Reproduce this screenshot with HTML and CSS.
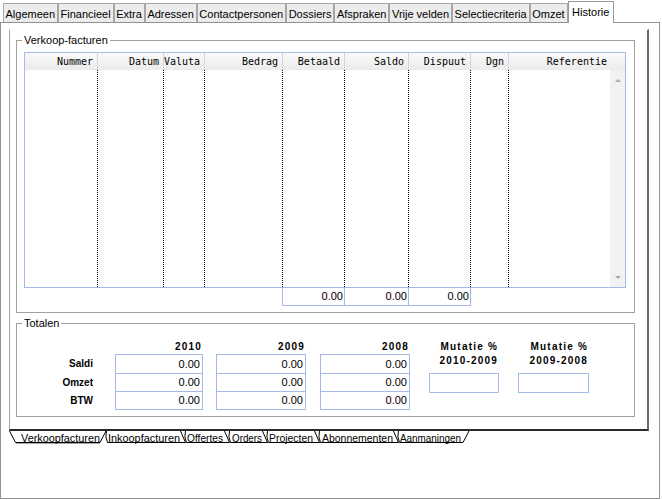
FILE: index.html
```html
<!DOCTYPE html>
<html>
<head>
<meta charset="utf-8">
<title>Historie</title>
<link rel="stylesheet" href="styles.css">
</head>
<body>
<div class="window">
  <div class="toptabs">
    <div class="tab">Algemeen</div>
    <div class="tab">Financieel</div>
    <div class="tab">Extra</div>
    <div class="tab">Adressen</div>
    <div class="tab">Contactpersonen</div>
    <div class="tab">Dossiers</div>
    <div class="tab">Afspraken</div>
    <div class="tab">Vrije velden</div>
    <div class="tab">Selectiecriteria</div>
    <div class="tab">Omzet</div>
    <div class="tab active">Historie</div>
  </div>
  <div class="frame">
    <div class="panel">
      <fieldset class="group g1">
        <legend>Verkoop-facturen</legend>
        <div class="grid">
          <div class="ghead">
            <div class="hc">Nummer</div>
            <div class="hc">Datum</div>
            <div class="hc">Valuta</div>
            <div class="hc">Bedrag</div>
            <div class="hc">Betaald</div>
            <div class="hc">Saldo</div>
            <div class="hc">Dispuut</div>
            <div class="hc">Dgn</div>
            <div class="hc noline">Referentie</div>
            <div class="hc noline"></div>
          </div>
          <div class="gbody">
            <div class="bc"></div>
            <div class="bc"></div>
            <div class="bc"></div>
            <div class="bc"></div>
            <div class="bc"></div>
            <div class="bc"></div>
            <div class="bc"></div>
            <div class="bc"></div>
            <div class="bc last"></div>
            <div class="scroll">
              <span class="arr up"></span>
              <span class="arr down"></span>
            </div>
          </div>
        </div>
        <div class="sumrow">
          <div class="sc s1">0.00</div>
          <div class="sc s2">0.00</div>
          <div class="sc s3">0.00</div>
        </div>
      </fieldset>
      <fieldset class="group g2">
        <legend>Totalen</legend>
        <div class="tot">
          <div class="tcol lab">
            <div class="th"></div>
            <div class="tl r1">Saldi</div>
            <div class="tl r2">Omzet</div>
            <div class="tl r3">BTW</div>
          </div>
          <div class="tcol ca">
            <div class="th">2010</div>
            <div class="cell r1">0.00</div>
            <div class="cell r2">0.00</div>
            <div class="cell r3">0.00</div>
          </div>
          <div class="tcol cb">
            <div class="th">2009</div>
            <div class="cell r1">0.00</div>
            <div class="cell r2">0.00</div>
            <div class="cell r3">0.00</div>
          </div>
          <div class="tcol cc">
            <div class="th">2008</div>
            <div class="cell r1">0.00</div>
            <div class="cell r2">0.00</div>
            <div class="cell r3">0.00</div>
          </div>
          <div class="tcol cd">
            <div class="th mh">Mutatie %<br>2010-2009</div>
            <div class="mbox"></div>
          </div>
          <div class="tcol ce">
            <div class="th mh">Mutatie %<br>2009-2008</div>
            <div class="mbox"></div>
          </div>
        </div>
      </fieldset>
    </div>
    <svg class="btabs" width="470" height="16" viewBox="0 0 470 16">
      <g transform="translate(-9,0)" font-family="Liberation Sans, Arial, sans-serif" font-size="11" fill="#000">
        <path d="M106.5,0 Q104.8,6 107.5,11.5 L185.5,11.5 L180.5,0" fill="none" stroke="#000"/>
        <text x="108" y="10.5" textLength="72" lengthAdjust="spacingAndGlyphs">Inkoopfacturen</text>
        <path d="M185.5,0 Q183.8,6 186.5,11.5 L229.5,11.5 L224.5,0" fill="none" stroke="#000"/>
        <text x="187" y="10.5" textLength="36" lengthAdjust="spacingAndGlyphs">Offertes</text>
        <path d="M229.5,0 Q227.8,6 230.5,11.5 L267.5,11.5 L262.5,0" fill="none" stroke="#000"/>
        <text x="232" y="10.5" textLength="30" lengthAdjust="spacingAndGlyphs">Orders</text>
        <path d="M267.5,0 Q265.8,6 268.5,11.5 L319.5,11.5 L314.5,0" fill="none" stroke="#000"/>
        <text x="269" y="10.5" textLength="44" lengthAdjust="spacingAndGlyphs">Projecten</text>
        <path d="M319.5,0 Q317.8,6 320.5,11.5 L398.5,11.5 L393.5,0" fill="none" stroke="#000"/>
        <text x="322" y="10.5" textLength="71" lengthAdjust="spacingAndGlyphs">Abonnementen</text>
        <path d="M398.5,0 Q396.8,6 399.5,11.5 L463,11.5 L469,0" fill="none" stroke="#000"/>
        <text x="400" y="10.5" textLength="61" lengthAdjust="spacingAndGlyphs">Aanmaningen</text>
        <path d="M9.5,0 L15.5,11.5 L100,11.5 L106,0" fill="none" stroke="#000"/>
        <line x1="16" y1="12.5" x2="100" y2="12.5" stroke="#a8a8a8"/>
        <text x="21" y="10.5" textLength="79" lengthAdjust="spacingAndGlyphs">Verkoopfacturen</text>
      </g>
    </svg>
  </div>
</div>
</body>
</html>
```

FILE: styles.css
```css
* { box-sizing: border-box; }
html, body { margin: 0; padding: 0; background: #fff; }
body {
  font-family: "Liberation Sans", Arial, sans-serif;
  font-size: 11px;
  color: #000;
}
.window {
  width: 662px;
  height: 500px;
  background: #fff;
  overflow: hidden;
}

/* top tabs */
.toptabs {
  display: flex;
  align-items: flex-end;
  height: 22px;
  padding-left: 3px;
  position: relative;
  z-index: 1;
}
.tab {
  height: 19px;
  line-height: 20px;
  padding: 0 2px 0 1.5px;
  background: #ececec;
  border-top: 1px solid #a6a6a6;
  border-left: 1px solid #a6a6a6;
  border-right: 1px solid #a6a6a6;
  white-space: nowrap;
}
.tab.active {
  height: 22px;
  margin-bottom: -1px;
  padding: 0 3.5px;
  background: #fff;
  border-left: 1px solid #9a9a9a;
  border-top: 1px solid #9a9a9a;
  border-right: 1px solid #9a9a9a;
}

/* outer frame */
.frame {
  width: 660px;
  height: 477px;
  border: 1px solid #919191;
  padding: 6px 10px 0 8px;
}
.panel {
  width: 640px;
  height: 402px;
  border-left: 1px solid #a0a0a0;
  border-top: 1px solid #fff;
  border-right: 2px solid #6c6c6c;
  border-bottom: 2px solid #2a2a2a;
  display: flex;
  flex-direction: column;
}

/* group boxes */
.group {
  margin: 0;
  min-inline-size: 0;
  border: 1px solid #a0a0a0;
  padding: 0 0 0 7px;
  width: 619px;
}
.group legend {
  padding: 0 2px;
  margin-left: -2px;
  line-height: 14px;
  font-size: 11px;
}
.g1 { margin: 3px 0 0 6px; height: 280px; }
.g2 { margin: 3px 0 0 6px; height: 101px; }

/* grid */
.grid {
  margin-top: 5px;
  width: 602px;
  height: 236px;
  border: 1px solid #a3bbe6;
  display: flex;
  flex-direction: column;
}
.ghead, .gbody {
  display: grid;
  grid-template-columns: 73px 66px 41px 78px 62px 64px 62px 38px 101px 15px;
}
.ghead {
  height: 17px;
  background: linear-gradient(#fafafa, #ebebeb);
}
.hc {
  font-family: "DejaVu Sans Mono", "Liberation Mono", monospace;
  font-size: 10px;
  line-height: 17px;
  text-align: right;
  padding-right: 4px;
  border-right: 1px solid #d6d6d6;
  white-space: nowrap;
  overflow: hidden;
}
.hc.noline { border-right: 0; padding-right: 3px; }
.gbody { flex: 1; }
.bc { border-right: 1px dotted #000; }
.bc.last { border-right: 0; }
.scroll {
  background: #f2f2f2;
  display: flex;
  flex-direction: column;
  justify-content: space-between;
  align-items: center;
  padding: 9px 0 8px;
}
.arr {
  width: 0;
  height: 0;
  border-left: 3px solid transparent;
  border-right: 3px solid transparent;
}
.arr.up { border-bottom: 3px solid #a8a8a8; }
.arr.down { border-top: 3px solid #a8a8a8; }

.sumrow {
  display: flex;
  margin-left: 258px;
}
.sc {
  height: 18px;
  line-height: 17px;
  text-align: right;
  padding-right: 1px;
  border-right: 1px solid #a3bbe6;
  border-bottom: 1px solid #a3bbe6;
}
.s1 { width: 63px; border-left: 1px solid #a3bbe6; }
.s2 { width: 64px; }
.s3 { width: 62px; }

/* totals */
.tot {
  display: flex;
  margin-top: 10px;
}
.tcol { display: flex; flex-direction: column; }
.lab { width: 69px; }
.ca { width: 88px; margin-left: 22px; }
.cb { width: 90px; margin-left: 13px; }
.cc { width: 90px; margin-left: 14px; }
.cd { width: 70px; margin-left: 19px; }
.ce { width: 71px; margin-left: 19px; }
.th {
  height: 14px;
  line-height: 14px;
  font-weight: bold;
  font-size: 10px;
  letter-spacing: 1.2px;
  text-align: right;
  padding-right: 1px;
  white-space: nowrap;
}
.th.mh { height: 28px; }
.tl {
  font-weight: bold;
  font-size: 10px;
  letter-spacing: 0;
  text-align: right;
}
.cell {
  border-left: 1px solid #a3bbe6;
  border-right: 1px solid #a3bbe6;
  border-bottom: 1px solid #a3bbe6;
  text-align: right;
  padding-right: 2px;
}
.cell.r1 { border-top: 1px solid #a3bbe6; }
.r1 { height: 20px; line-height: 18px; }
.tl.r1 { line-height: 20px; }
.r2, .r3 { height: 18px; line-height: 17px; }
.tl.r2, .tl.r3 { line-height: 18px; }
.mbox {
  margin-top: 5px;
  height: 20px;
  border: 1px solid #a3bbe6;
}

/* bottom tabs */
.btabs { display: block; }
```
